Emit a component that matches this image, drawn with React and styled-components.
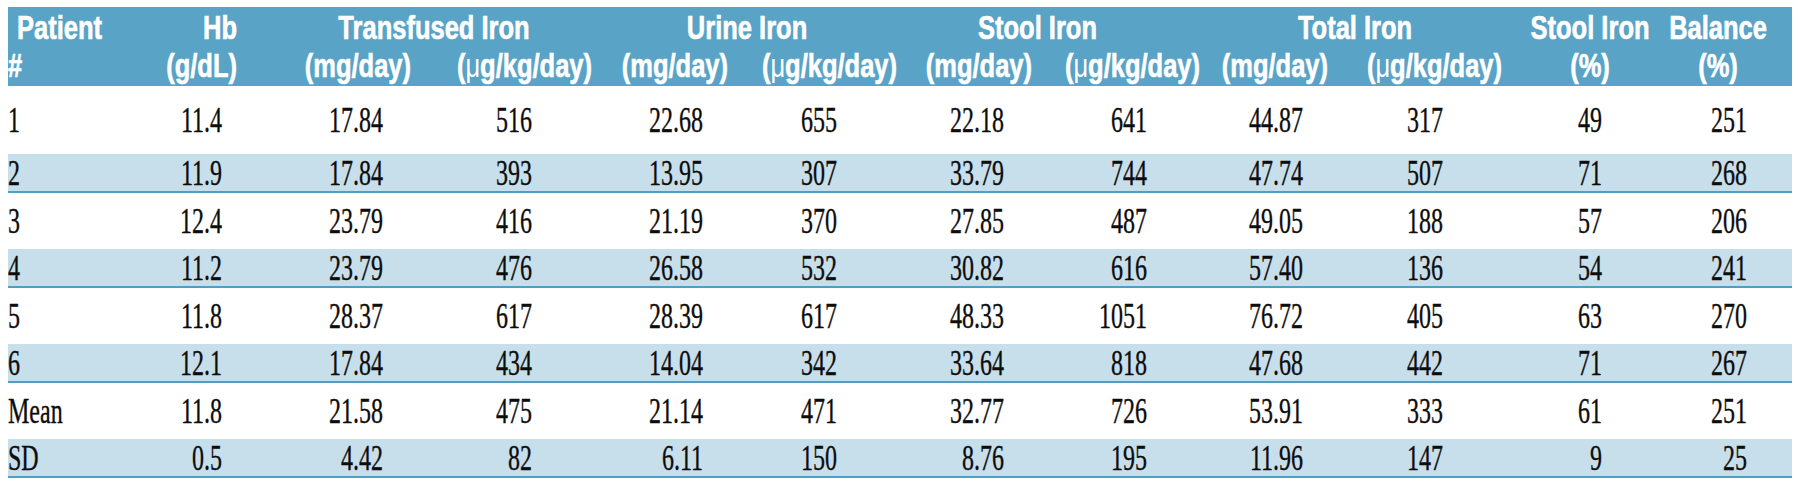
import styled, { createGlobalStyle } from 'styled-components';

const HEAD_BG = '#58a3c6';
const BAND_BG = '#c7deeb';
const RULE = '#4f9ec3';

const GlobalStyle = createGlobalStyle`
  body {
    margin: 7px 8px;
    background: #fff;
  }
`;

const Table = styled.table`
  width: 1785px;
  border-collapse: collapse;
  table-layout: fixed;
`;

const HeadRow = styled.tr`
  background: ${HEAD_BG};
`;

const HeadCell = styled.th`
  padding: ${(p) => (p.$top ? '1px' : '0')} ${(p) => p.$padR || 0}px
    ${(p) => (p.$top ? '0' : '2px')} ${(p) => p.$padL || 0}px;
  height: 38px;
  line-height: 38px;
  text-align: ${(p) => p.$align || 'right'};
  vertical-align: top;
  color: #fff;
  font-family: 'Liberation Sans', Arial, sans-serif;
  font-weight: 700;
  font-size: 25.5px;
  white-space: nowrap;
  -webkit-text-stroke: 0.5px #fff;
`;

// condensed look: keep the narrow width, stretch the glyphs up
const Label = styled.span`
  display: inline-block;
  transform: scaleY(1.3);
`;

const Mu = styled.span`
  font-weight: 400;
  -webkit-text-stroke: 0;
`;

const Row = styled.tr`
  background: ${(p) => (p.$shaded ? BAND_BG : '#fff')};
  border-bottom: ${(p) => (p.$shaded ? `2px solid ${RULE}` : 'none')};
`;

const Cell = styled.td`
  height: ${(p) => p.$height}px;
  padding: 0 ${(p) => p.$pad}px 0 0;
  text-align: ${(p) => (p.$first ? 'left' : 'right')};
  vertical-align: middle;
  color: #0d0d0d;
  font-family: 'Liberation Serif', 'Times New Roman', serif;
  font-size: 24px;
  line-height: 1;
  white-space: nowrap;
  -webkit-text-stroke: 0.25px #0d0d0d;
`;

const Num = styled.span`
  display: inline-block;
  transform: scaleY(1.45);
`;

// width of each column and right padding of its data
const columns = [
  { width: 122, pad: 0 },
  { width: 111, pad: 19 },
  { width: 174, pad: 32 },
  { width: 178, pad: 61 },
  { width: 139, pad: 29 },
  { width: 169, pad: 64 },
  { width: 135, pad: 32 },
  { width: 168, pad: 57 },
  { width: 128, pad: 29 },
  { width: 174, pad: 63 },
  { width: 154, pad: 58 },
  { width: 133, pad: 46 },
];

const groups = [
  { title: 'Transfused Iron', padL: 34, padR: 0 },
  { title: 'Urine Iron', padL: 0, padR: 0 },
  { title: 'Stool Iron', padL: 0, padR: 30 },
  { title: 'Total Iron', padL: 0, padR: 0 },
];

const rows = [
  ['1', '11.4', '17.84', '516', '22.68', '655', '22.18', '641', '44.87', '317', '49', '251'],
  ['2', '11.9', '17.84', '393', '13.95', '307', '33.79', '744', '47.74', '507', '71', '268'],
  ['3', '12.4', '23.79', '416', '21.19', '370', '27.85', '487', '49.05', '188', '57', '206'],
  ['4', '11.2', '23.79', '476', '26.58', '532', '30.82', '616', '57.40', '136', '54', '241'],
  ['5', '11.8', '28.37', '617', '28.39', '617', '48.33', '1051', '76.72', '405', '63', '270'],
  ['6', '12.1', '17.84', '434', '14.04', '342', '33.64', '818', '47.68', '442', '71', '267'],
  ['Mean', '11.8', '21.58', '475', '21.14', '471', '32.77', '726', '53.91', '333', '61', '251'],
  ['SD', '0.5', '4.42', '82', '6.11', '150', '8.76', '195', '11.96', '147', '9', '25'],
];

function rowHeight(i) {
  if (i === 0) return 68;
  return i % 2 === 1 ? 37 : 56;
}

export default function App() {
  return (
    <>
      <GlobalStyle />
      <Table>
        <colgroup>
          {columns.map((c, i) => (
            <col key={i} style={{ width: c.width }} />
          ))}
        </colgroup>
        <thead>
          <HeadRow>
            <HeadCell $top $align="left" $padL={9}>
              <Label>Patient</Label>
            </HeadCell>
            <HeadCell $top $padR={4}>
              <Label>Hb</Label>
            </HeadCell>
            {groups.map((g) => (
              <HeadCell key={g.title} $top colSpan={2} $align="center" $padL={g.padL} $padR={g.padR}>
                <Label>{g.title}</Label>
              </HeadCell>
            ))}
            <HeadCell $top $align="center" $padL={14}>
              <Label>Stool Iron</Label>
            </HeadCell>
            <HeadCell $top $align="center" $padR={17}>
              <Label>Balance</Label>
            </HeadCell>
          </HeadRow>
          <HeadRow>
            <HeadCell $align="left">
              <Label>#</Label>
            </HeadCell>
            <HeadCell $padR={4}>
              <Label>(g/dL)</Label>
            </HeadCell>
            {groups.map((g, i) => [
              <HeadCell key={`mg${i}`} $padR={4}>
                <Label>(mg/day)</Label>
              </HeadCell>,
              <HeadCell key={`ug${i}`} $padR={i === 0 ? 1 : 4}>
                <Label>
                  (<Mu>μ</Mu>g/kg/day)
                </Label>
              </HeadCell>,
            ])}
            <HeadCell $align="center" $padL={14}>
              <Label>(%)</Label>
            </HeadCell>
            <HeadCell $align="center" $padR={17}>
              <Label>(%)</Label>
            </HeadCell>
          </HeadRow>
        </thead>
        <tbody>
          {rows.map((r, i) => (
            <Row key={r[0]} $shaded={i % 2 === 1}>
              {r.map((v, j) => (
                <Cell key={j} $first={j === 0} $pad={columns[j].pad} $height={rowHeight(i)}>
                  <Num>{v}</Num>
                </Cell>
              ))}
            </Row>
          ))}
        </tbody>
      </Table>
    </>
  );
}
